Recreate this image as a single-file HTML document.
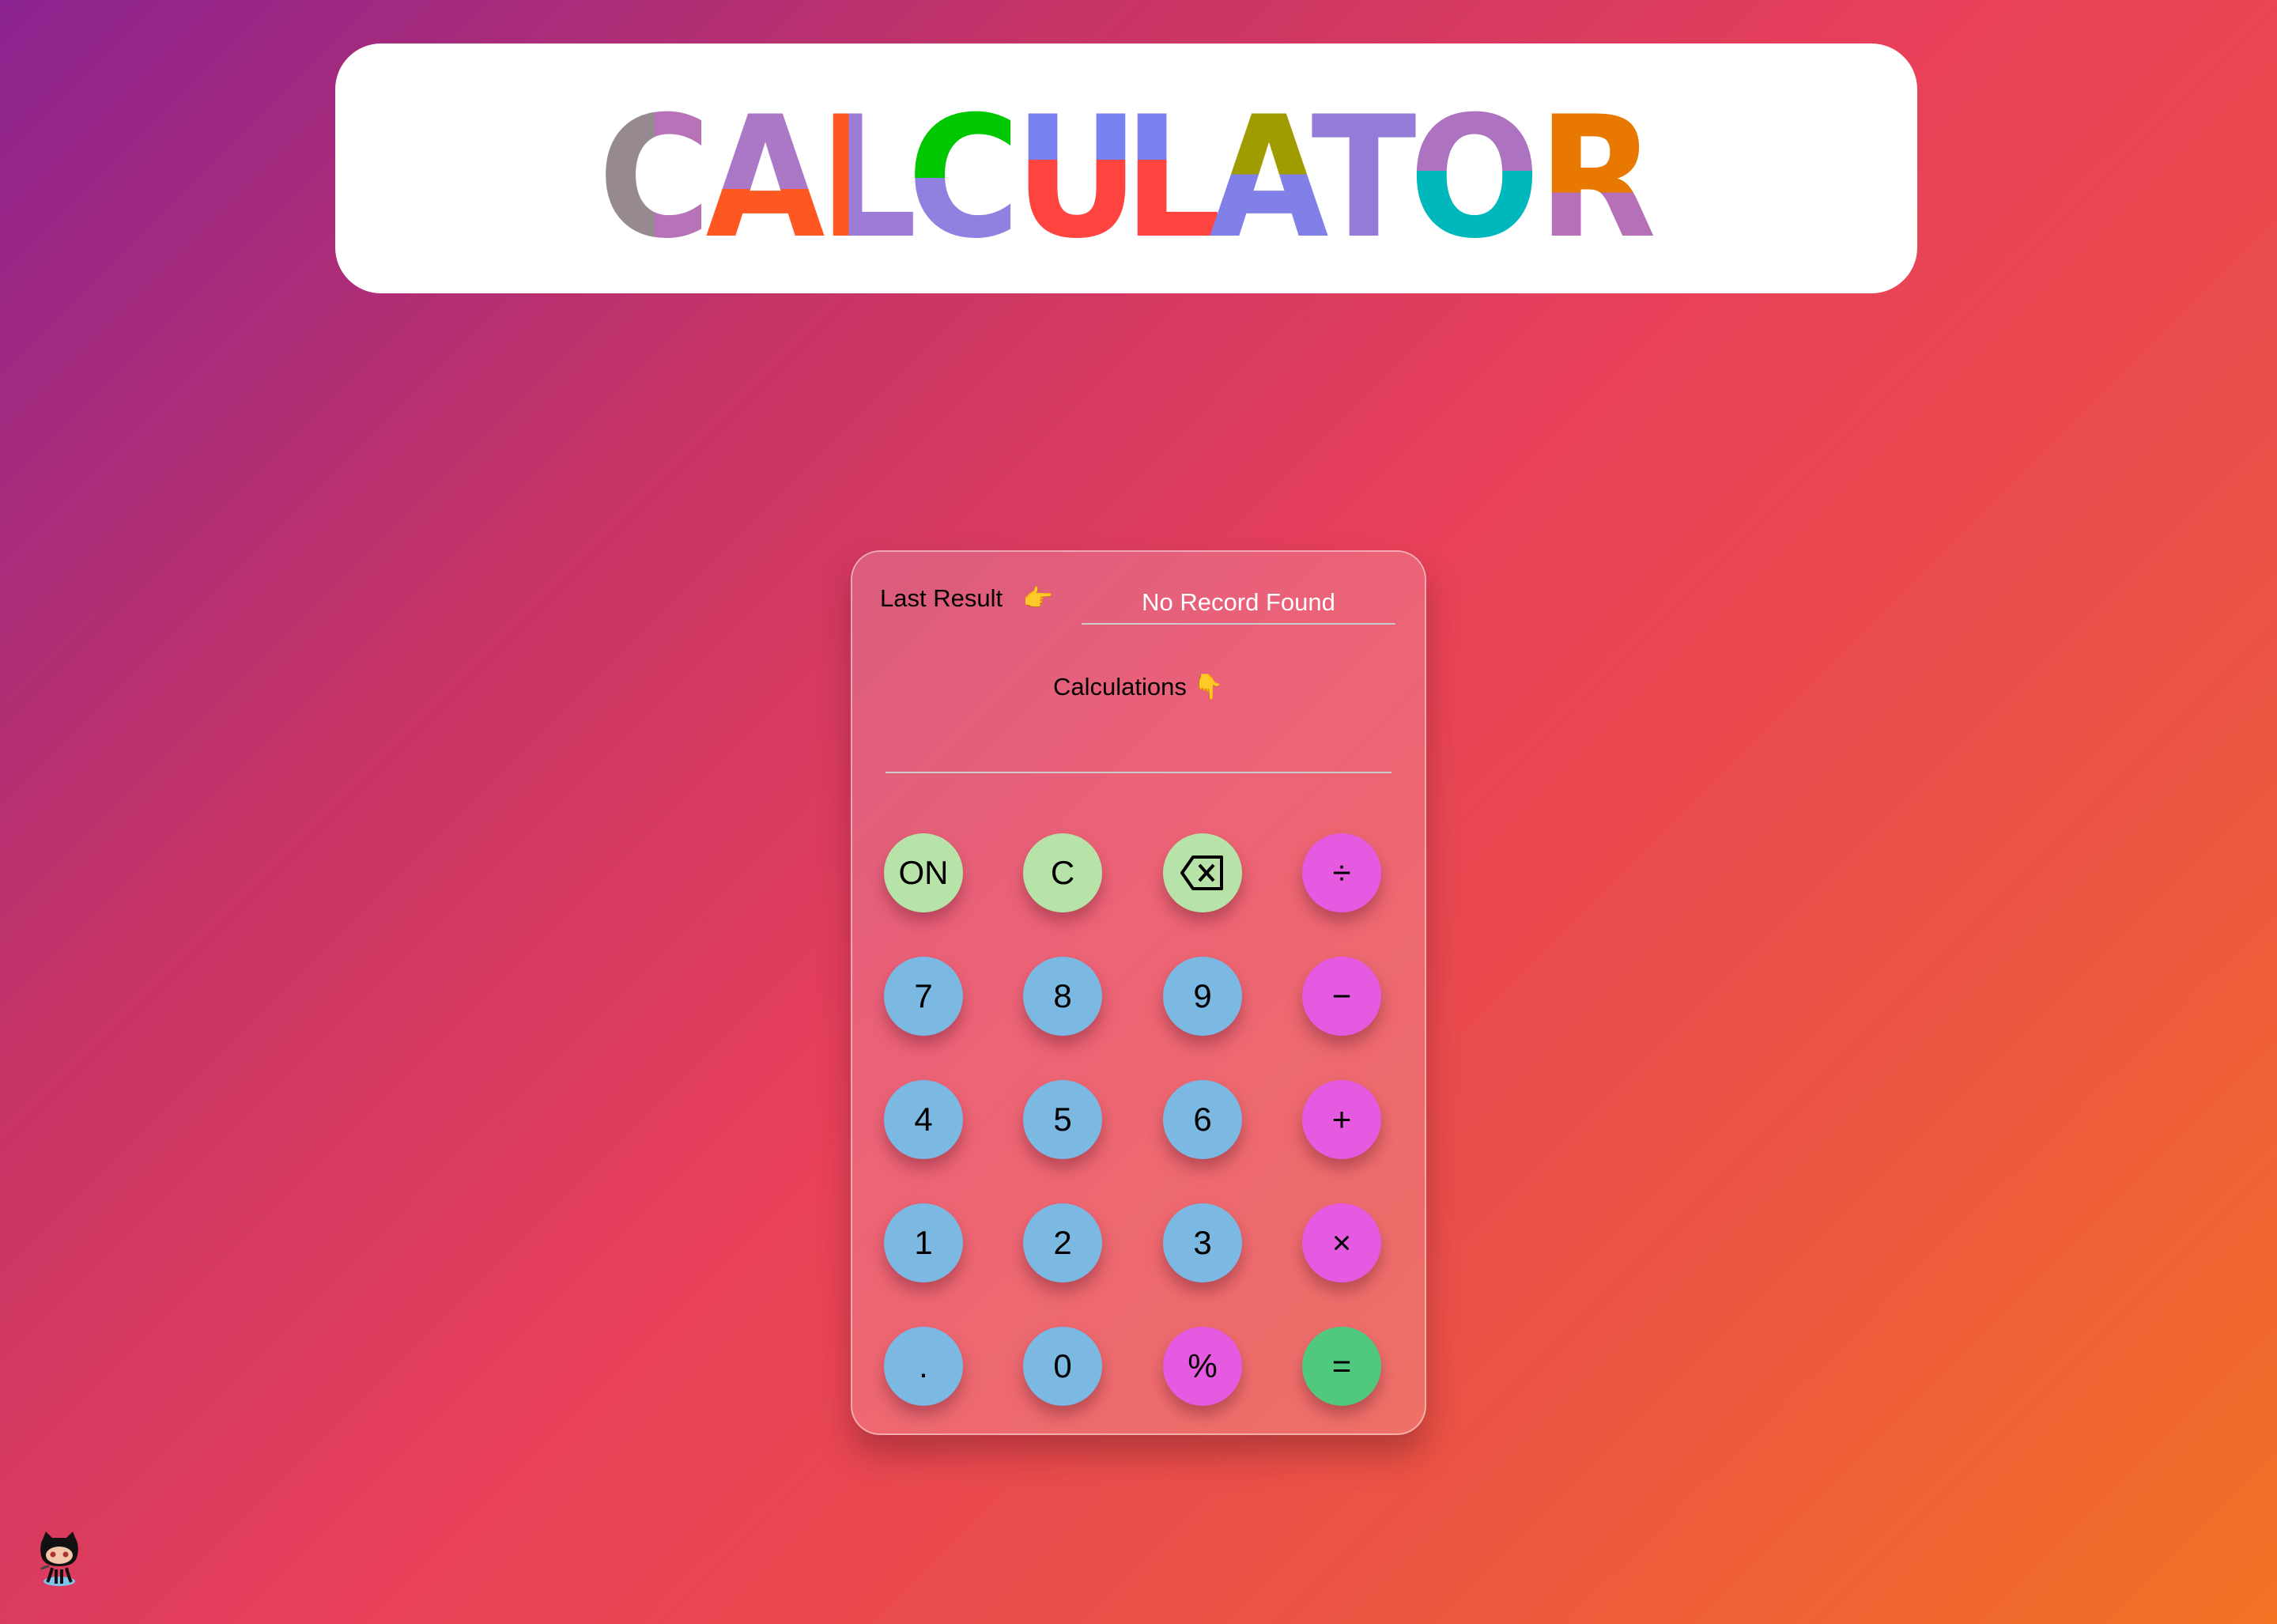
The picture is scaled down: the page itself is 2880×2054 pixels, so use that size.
<!DOCTYPE html>
<html><head><meta charset="utf-8"><style>
*{margin:0;padding:0;box-sizing:border-box}
html,body{width:2880px;height:2054px;overflow:hidden}
body{background:linear-gradient(135deg,#8b2390 0%,#c63466 28%,#e8405a 50%,#ec5344 75%,#f27224 100%);font-family:"Liberation Sans","DejaVu Sans",sans-serif;position:relative}
.head{position:absolute;left:424px;top:55px;width:2001px;height:316px;background:#fff;border-radius:58px}
.L{position:absolute;top:110px;width:220px;height:230px;font-family:"DejaVu Sans",sans-serif;font-weight:bold;font-size:212px;line-height:230px;text-align:center;-webkit-background-clip:text;background-clip:text;color:transparent;-webkit-text-fill-color:transparent;transform:scaleX(0.92)}
.card{position:absolute;left:1076px;top:696px;width:728px;height:1119px;border-radius:37px;background:rgba(255,255,255,0.18);border:2px solid rgba(255,255,255,0.45);box-shadow:0 25px 40px rgba(80,20,30,0.35)}
.t{position:absolute;font-size:31px;color:#000;white-space:nowrap}
.b{position:absolute;width:100px;height:100px;border-radius:50%;display:flex;align-items:center;justify-content:center;font-size:42px;color:#000;box-shadow:0 12px 18px rgba(90,20,40,0.35)}
.g{background:#b7e3a8}.bl{background:#7bb8e2}.m{background:#e55ae0}.eq{background:#50c97f}
</style></head><body>
<div class="head"></div>
<div class="L" style="left:718px;background-image:linear-gradient(to right,#968a90 50%,#b872b8 50%);">C</div>
<div class="L" style="left:858px;background-image:linear-gradient(to bottom,#ab78c8 56%,#ff5722 56%)">A</div>
<div class="L" style="left:988px;background-image:linear-gradient(to right,#ff5722 38%,#9d7cd8 38%)">L</div>
<div class="L" style="left:1109px;background-image:linear-gradient(to bottom,#00c800 50%,#9080e0 50%)">C</div>
<div class="L" style="left:1252px;background-image:linear-gradient(to bottom,#7882ef 40%,#ff4440 40%)">U</div>
<div class="L" style="left:1373px;background-image:linear-gradient(to bottom,#7a80ee 40%,#ff4440 40%)">L</div>
<div class="L" style="left:1495px;background-image:linear-gradient(to bottom,#a09c00 48%,#8080e8 48%)">A</div>
<div class="L" style="left:1615px;background-image:linear-gradient(#957bd8,#957bd8)">T</div>
<div class="L" style="left:1755px;background-image:linear-gradient(to bottom,#ad72c0 46%,#00b8bc 46%)">O</div>
<div class="L" style="left:1910px;background-image:linear-gradient(to bottom,#e87800 58%,#b670b8 58%)">R</div>

<div class="card"></div>
<div class="t" style="left:1113px;top:738px">Last Result &nbsp;&nbsp;👉</div>
<div class="t" style="left:1368px;top:744px;width:397px;text-align:center;color:#fff">No Record Found</div>
<div style="position:absolute;left:1368px;top:788px;width:397px;height:2px;background:#ccc;border-radius:2px"></div>
<div class="t" style="left:1240px;top:850px;width:400px;text-align:center">Calculations 👇</div>
<div style="position:absolute;left:1120px;top:976px;width:640px;height:2px;background:#ccc"></div>

<div class="b g" style="left:1118px;top:1054px">ON</div>
<div class="b g" style="left:1294px;top:1054px">C</div>
<div class="b g" style="left:1471px;top:1054px"><svg width="60" height="48" viewBox="0 0 60 48"><path d="M18 4H54V44H18L4 24Z" fill="none" stroke="#000" stroke-width="4" stroke-linejoin="round"/><path d="M26 14L44 34M44 14L26 34" stroke="#000" stroke-width="4"/></svg></div>
<div class="b m" style="left:1647px;top:1054px">÷</div>
<div class="b bl" style="left:1118px;top:1210px">7</div>
<div class="b bl" style="left:1294px;top:1210px">8</div>
<div class="b bl" style="left:1471px;top:1210px">9</div>
<div class="b m" style="left:1647px;top:1210px">−</div>
<div class="b bl" style="left:1118px;top:1366px">4</div>
<div class="b bl" style="left:1294px;top:1366px">5</div>
<div class="b bl" style="left:1471px;top:1366px">6</div>
<div class="b m" style="left:1647px;top:1366px">+</div>
<div class="b bl" style="left:1118px;top:1522px">1</div>
<div class="b bl" style="left:1294px;top:1522px">2</div>
<div class="b bl" style="left:1471px;top:1522px">3</div>
<div class="b m" style="left:1647px;top:1522px">×</div>
<div class="b bl" style="left:1118px;top:1678px">.</div>
<div class="b bl" style="left:1294px;top:1678px">0</div>
<div class="b m" style="left:1471px;top:1678px">%</div>
<div class="b eq" style="left:1647px;top:1678px">=</div>

<svg style="position:absolute;left:40px;top:1935px" width="70" height="75" viewBox="0 0 70 75">
<ellipse cx="35" cy="65" rx="20" ry="6" fill="#7ec3ea"/>
<path d="M26 48C24 56 22 62 20 66M31 50V68M38 50V68M44 48C46 56 48 62 50 66" stroke="#111" stroke-width="4" fill="none"/>
<path d="M22 46C16 46 14 50 12 48" stroke="#444" stroke-width="3" fill="none"/>
<path d="M14 12L18 2L26 10H44L52 2L56 12C60 18 60 34 54 40C48 48 22 48 16 40C10 34 10 18 14 12Z" fill="#111"/>
<ellipse cx="35" cy="32" rx="17" ry="11" fill="#f2c6a8"/>
<circle cx="27" cy="31" r="3.5" fill="#a33"/><circle cx="43" cy="31" r="3.5" fill="#a33"/>
</svg>
</body></html>
